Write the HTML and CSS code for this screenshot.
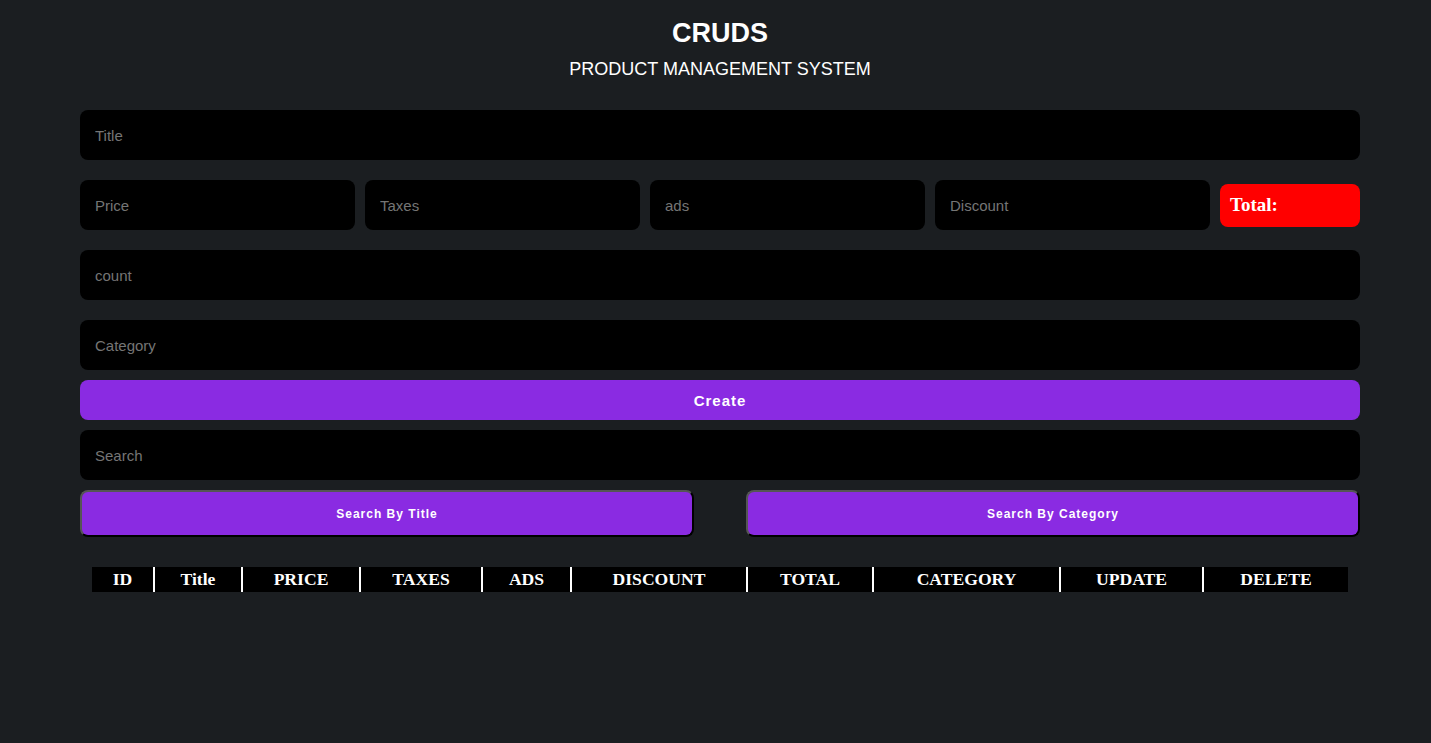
FILE: index.html
```html
<!DOCTYPE html>
<html>
<head>
<meta charset="utf-8">
<title>CRUDS</title>
<link rel="stylesheet" href="styles.css">
</head>
<body>
<div class="crud">
  <div class="head">
    <h2 class="title">CRUDS</h2>
    <p class="subtitle">PRODUCT MANAGEMENT SYSTEM</p>
  </div>
  <div class="inputs">
    <input class="field" type="text" placeholder="Title">
    <div class="price">
      <input class="field small" type="number" placeholder="Price">
      <input class="field small" type="number" placeholder="Taxes">
      <input class="field small" type="number" placeholder="ads">
      <input class="field small" type="number" placeholder="Discount">
      <small class="total">Total:</small>
    </div>
    <input class="field" type="number" placeholder="count">
    <input class="field tight" type="text" placeholder="Category">
    <button class="create">Create</button>
  </div>
  <div class="search-block">
    <input class="field tight" type="text" placeholder="Search">
    <div class="btn-search">
      <button class="sbtn">Search By Title</button>
      <button class="sbtn">Search By Category</button>
    </div>
  </div>
  <div class="outputs">
    <table class="tbl">
      <thead>
        <tr>
          <th class="c1">ID</th>
          <th class="c2">Title</th>
          <th class="c3">PRICE</th>
          <th class="c4">TAXES</th>
          <th class="c5">ADS</th>
          <th class="c6">DISCOUNT</th>
          <th class="c7">TOTAL</th>
          <th class="c8">CATEGORY</th>
          <th class="c9">UPDATE</th>
          <th class="c10">DELETE</th>
        </tr>
      </thead>
      <tbody></tbody>
    </table>
  </div>
</div>
</body>
</html>
```

FILE: styles.css
```css
* { box-sizing: border-box; }
html, body {
  margin: 0;
  padding: 0;
  background: #1b1e21;
  color: #fff;
  font-family: "Liberation Sans", Arial, sans-serif;
  height: 100%;
}
.crud {
  width: 1280px;
  margin-left: 80px;
  padding-top: 18px;
}
.head { text-align: center; }
.title {
  margin: 0;
  font-size: 27px;
  font-weight: bold;
  line-height: 31px;
}
.subtitle {
  margin: 10px 0 0 0;
  font-size: 18px;
  line-height: 21px;
}
.inputs {
  margin-top: 30px;
  display: flex;
  flex-direction: column;
}
.field {
  display: block;
  width: 100%;
  height: 50px;
  background: #000;
  border: none;
  outline: none;
  border-radius: 8px;
  padding: 0 15px;
  color: #fff;
  font-family: "Liberation Sans", Arial, sans-serif;
  font-size: 15px;
  margin: 0 0 20px 0;
  -moz-appearance: textfield;
  appearance: textfield;
}
.field::-webkit-outer-spin-button,
.field::-webkit-inner-spin-button {
  -webkit-appearance: none;
  margin: 0;
}
.field::placeholder { color: #757575; }
.field.tight { margin-bottom: 10px; }
.price {
  display: flex;
  align-items: center;
  gap: 10px;
  margin-bottom: 20px;
}
.field.small {
  width: 275px;
  margin-bottom: 0;
}
.total {
  flex: 1;
  height: 43px;
  background: #f00;
  border-radius: 8px;
  display: flex;
  align-items: center;
  padding-left: 10px;
  font-family: "Liberation Serif", "Times New Roman", serif;
  font-weight: bold;
  font-size: 19px;
  color: #fff;
}
.create {
  height: 40px;
  width: 100%;
  border: none;
  border-radius: 8px;
  background: #8a2be2;
  color: #fff;
  font-family: "Liberation Sans", Arial, sans-serif;
  font-weight: bold;
  font-size: 15px;
  letter-spacing: 1px;
  margin-bottom: 10px;
  cursor: pointer;
}
.btn-search {
  display: flex;
  justify-content: space-between;
}
.sbtn {
  width: 614px;
  height: 47px;
  background: #8a2be2;
  color: #fff;
  border-style: solid;
  border-width: 2px;
  border-color: #555 #000 #000 #555;
  border-radius: 8px;
  font-family: "Liberation Sans", Arial, sans-serif;
  font-weight: bold;
  font-size: 12px;
  letter-spacing: 1px;
  cursor: pointer;
}
.outputs {
  margin-top: 30px;
  padding: 0 12px;
}
.tbl {
  width: 100%;
  border-collapse: collapse;
  table-layout: fixed;
}
.tbl th {
  background: #000;
  color: #fff;
  height: 25px;
  padding: 0;
  font-family: "Liberation Serif", "Times New Roman", serif;
  font-weight: bold;
  font-size: 17.6px;
  text-align: center;
  border-left: 2px solid #fff;
}
.tbl th:first-child { border-left: none; }
.c1 { width: 62px; }
.c2 { width: 88px; }
.c3 { width: 118px; }
.c4 { width: 122px; }
.c5 { width: 89px; }
.c6 { width: 176px; }
.c7 { width: 126px; }
.c8 { width: 187px; }
.c9 { width: 143px; }
.c10 { width: 145px; }
```
